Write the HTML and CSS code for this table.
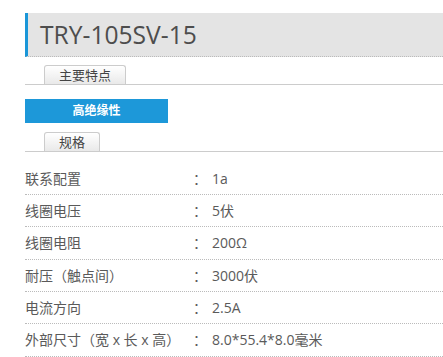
FILE: index.html
```html
<!DOCTYPE html>
<html lang="zh-CN">
<head>
  <meta charset="UTF-8" />
  <meta name="viewport" content="width=device-width, initial-scale=1.0"/>
  <title>TRY-105SV-15</title>
  <link rel="stylesheet" href="styles.css">
</head>
<body>

  <div class="product">
    <!-- 型号 -->
    <h1 class="product-title">TRY-105SV-15</h1>

    <!-- 主要特点 -->
    <div class="tab-bar">
      <span class="tab">主要特点</span>
    </div>
    <div class="feature">高绝缘性</div>

    <!-- 规格 -->
    <div class="tab-bar tab-bar-spec">
      <span class="tab">规格</span>
    </div>

    <div class="spec-list">
      <div class="spec-row">
        <span class="spec-name">联系配置</span>
        <span class="spec-colon">：</span>
        <span class="spec-value">1a</span>
      </div>
      <div class="spec-row">
        <span class="spec-name">线圈电压</span>
        <span class="spec-colon">：</span>
        <span class="spec-value">5伏</span>
      </div>
      <div class="spec-row">
        <span class="spec-name">线圈电阻</span>
        <span class="spec-colon">：</span>
        <span class="spec-value">200Ω</span>
      </div>
      <div class="spec-row">
        <span class="spec-name">耐压（触点间）</span>
        <span class="spec-colon">：</span>
        <span class="spec-value">3000伏</span>
      </div>
      <div class="spec-row">
        <span class="spec-name">电流方向</span>
        <span class="spec-colon">：</span>
        <span class="spec-value">2.5A</span>
      </div>
      <div class="spec-row">
        <span class="spec-name">外部尺寸（宽 x 长 x 高）</span>
        <span class="spec-colon">：</span>
        <span class="spec-value">8.0*55.4*8.0毫米</span>
      </div>
    </div>
  </div>

</body>
</html>
```

FILE: styles.css
```css
/* 基本样式 */
body {
  font-family: 'Open Sans', 'Noto Sans CJK SC', sans-serif;
  background-color: #fff;
  margin: 0;
  padding: 0;
  color: #555;
  overflow: hidden;
}

.product {
  margin-left: 25px;
  padding-top: 13px;
}

/* 型号标题 */
.product-title {
  margin: 0;
  height: 43px;
  line-height: 43px;
  padding-left: 12px;
  font-size: 24.6px;
  font-weight: normal;
  color: #4d4d4d;
  background-color: #e4e4e4;
  border-left: 3px solid #1a96d8;
  border-bottom: 1px dotted #bbb;
}

/* 选项卡 */
.tab-bar {
  margin-top: 8px;
  padding-left: 19px;
  height: 19px;
  border-bottom: 1px solid #ccc;
  display: flex;
  align-items: flex-end;
}

.tab-bar-spec {
  margin-top: 9px;
}

.tab {
  display: block;
  height: 18px;
  line-height: 18px;
  padding: 0 14px;
  font-size: 13px;
  color: #444;
  border: 1px solid #ccc;
  border-bottom: none;
  border-radius: 3px 3px 0 0;
  background: linear-gradient(#fff, #e9e9e9);
}

/* 特点 */
.feature {
  margin-top: 14px;
  width: 143px;
  height: 24px;
  line-height: 24px;
  text-align: center;
  font-size: 12px;
  font-weight: bold;
  color: #fff;
  background-color: #1d98d9;
}

/* 规格表 */
.spec-list {
  margin-top: 10.5px;
}

.spec-row {
  display: flex;
  height: 31.4px;
  line-height: 31.4px;
  font-size: 14px;
  color: #5a5a5a;
  border-bottom: 1px dotted #bbb;
}

.spec-name {
  width: 168px;
  white-space: nowrap;
}

.spec-colon {
  width: 19px;
}
```
